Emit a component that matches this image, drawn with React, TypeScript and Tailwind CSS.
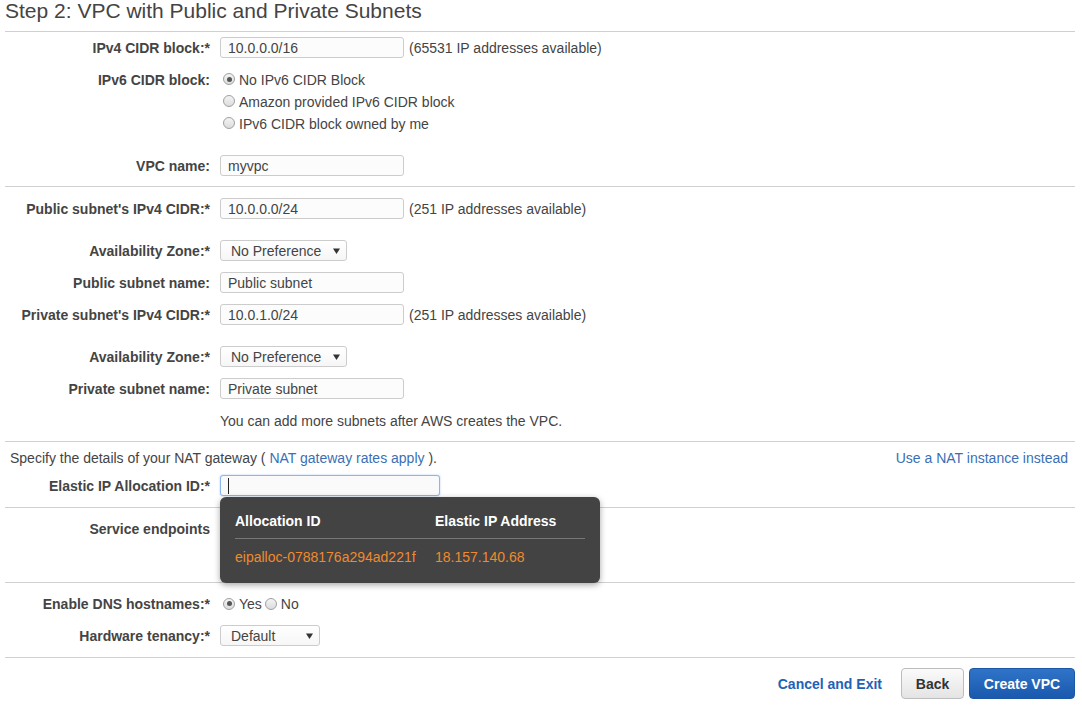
import React from "react";

function Label({ children }: { children: React.ReactNode }) {
  return (
    <div className="w-[205px] shrink-0 text-right font-bold text-[#444] whitespace-nowrap pt-[2px]">
      {children}
    </div>
  );
}

function Row({
  label,
  children,
  className,
}: {
  label: React.ReactNode;
  children?: React.ReactNode;
  className: string;
}) {
  return (
    <div className={className}>
      <Label>{label}</Label>
      <div className="ml-[10px] flex items-center">{children}</div>
    </div>
  );
}

function TextBox({ value, w }: { value: string; w: string }) {
  return (
    <div
      className={
        w +
        " h-[21px] border border-[#cccccc] rounded-[3px] bg-[#fcfcfc] pl-[7px] pt-[2px] flex items-center text-[#444] whitespace-nowrap"
      }
    >
      {value}
    </div>
  );
}

function Arrow() {
  return (
    <svg width="7" height="6" viewBox="0 0 7 6" className="shrink-0">
      <path d="M0 0.5 H7 L3.5 6 Z" fill="#333" />
    </svg>
  );
}

function Select({ value, w }: { value: string; w: string }) {
  return (
    <div
      className={
        w +
        " h-[21px] border border-[#cccccc] rounded-[3px] bg-gradient-to-b from-white to-[#f6f6f6] pl-[10px] pr-[6px] flex items-center justify-between text-[#444] whitespace-nowrap"
      }
    >
      <span className="pt-[2px]">{value}</span>
      <Arrow />
    </div>
  );
}

function Radio({ checked }: { checked?: boolean }) {
  return (
    <span className="w-[12px] h-[12px] rounded-full border border-[#a0a0a0] bg-gradient-to-b from-[#f4f4f4] to-[#dcdcdc] flex items-center justify-center shrink-0">
      {checked ? <span className="w-[5px] h-[5px] rounded-full bg-[#555]" /> : null}
    </span>
  );
}

function Hr({ className }: { className: string }) {
  return <div className={className + " h-px bg-[#d0d0d0]"} />;
}

export default function App() {
  return (
    <div className="relative w-[1082px] h-[726px] bg-white overflow-hidden font-['Liberation_Sans',Arial,sans-serif] text-[14px] text-[#444]">
      <div className="pl-[5px] pr-[7px]">
        <div className="h-[31px] text-[21px] leading-[22px] text-[#444] whitespace-nowrap">
          Step 2: VPC with Public and Private Subnets
        </div>
        <Hr className="" />

        <Row label={<>IPv4 CIDR block:*</>} className="mt-[5px] h-[21px] flex items-center">
          <TextBox value="10.0.0.0/16" w="w-[184px]" />
          <span className="ml-[5px] whitespace-nowrap pt-[2px]">(65531 IP addresses available)</span>
        </Row>

        <div className="mt-[10px] flex items-start">
          <div className="h-[22px] flex items-center">
            <Label>IPv6 CIDR block:</Label>
          </div>
          <div className="ml-[10px] flex flex-col">
            <div className="h-[22px] flex items-center">
              <span className="ml-[3px] mr-[4px]">
                <Radio checked />
              </span>
              <span className="pt-[2px]">No IPv6 CIDR Block</span>
            </div>
            <div className="h-[22px] flex items-center">
              <span className="ml-[3px] mr-[4px]">
                <Radio />
              </span>
              <span className="pt-[2px]">Amazon provided IPv6 CIDR block</span>
            </div>
            <div className="h-[22px] flex items-center">
              <span className="ml-[3px] mr-[4px]">
                <Radio />
              </span>
              <span className="pt-[2px]">IPv6 CIDR block owned by me</span>
            </div>
          </div>
        </div>

        <Row label="VPC name:" className="mt-[21px] h-[21px] flex items-center">
          <TextBox value="myvpc" w="w-[184px]" />
        </Row>

        <Hr className="mt-[10px]" />

        <Row label={<>Public subnet's IPv4 CIDR:*</>} className="mt-[11px] h-[21px] flex items-center">
          <TextBox value="10.0.0.0/24" w="w-[184px]" />
          <span className="ml-[5px] whitespace-nowrap pt-[2px]">(251 IP addresses available)</span>
        </Row>

        <Row label={<>Availability Zone:*</>} className="mt-[21px] h-[21px] flex items-center">
          <Select value="No Preference" w="w-[127px]" />
        </Row>

        <Row label="Public subnet name:" className="mt-[11px] h-[21px] flex items-center">
          <TextBox value="Public subnet" w="w-[184px]" />
        </Row>

        <Row label={<>Private subnet's IPv4 CIDR:*</>} className="mt-[11px] h-[21px] flex items-center">
          <TextBox value="10.0.1.0/24" w="w-[184px]" />
          <span className="ml-[5px] whitespace-nowrap pt-[2px]">(251 IP addresses available)</span>
        </Row>

        <Row label={<>Availability Zone:*</>} className="mt-[21px] h-[21px] flex items-center">
          <Select value="No Preference" w="w-[127px]" />
        </Row>

        <Row label="Private subnet name:" className="mt-[11px] h-[21px] flex items-center">
          <TextBox value="Private subnet" w="w-[184px]" />
        </Row>

        <Row label="" className="mt-[11px] h-[21px] flex items-center">
          <span className="whitespace-nowrap pt-[2px]">You can add more subnets after AWS creates the VPC.</span>
        </Row>

        <Hr className="mt-[10px]" />

        <div className="mt-[5px] h-[21px] flex items-center justify-between pt-[2px]">
          <div className="ml-[5px] whitespace-nowrap">
            Specify the details of your NAT gateway ({" "}
            <span className="text-[#3a6fb5]">NAT gateway rates apply</span> ).
          </div>
          <div className="mr-[7px] text-[#3a6fb5] whitespace-nowrap">Use a NAT instance instead</div>
        </div>

        <Row label={<>Elastic IP Allocation ID:*</>} className="mt-[7px] h-[21px] flex items-center">
          <div className="w-[220px] h-[21px] border border-[#8cb4ee] rounded-[3px] bg-[#fafafa] pl-[7px] flex items-center shadow-[0_0_2px_rgba(102,160,233,0.6)]">
            <span className="w-px h-[16px] bg-[#222]" />
          </div>
        </Row>

        <Hr className="mt-[11px]" />

        <Row label="Service endpoints" className="mt-[10px] h-[21px] flex items-center" />

        <Hr className="mt-[43px]" />

        <Row label={<>Enable DNS hostnames:*</>} className="mt-[10px] h-[21px] flex items-center">
          <span className="ml-[3px] mr-[4px]">
            <Radio checked />
          </span>
          <span className="pt-[2px]">Yes</span>
          <span className="ml-[3px] mr-[4px]">
            <Radio />
          </span>
          <span className="pt-[2px]">No</span>
        </Row>

        <Row label={<>Hardware tenancy:*</>} className="mt-[11px] h-[21px] flex items-center">
          <Select value="Default" w="w-[100px]" />
        </Row>

        <Hr className="mt-[11px]" />

        <div className="mt-[10px] flex items-center justify-end">
          <span className="font-bold text-[#1e62b6] whitespace-nowrap pt-[2px]">Cancel and Exit</span>
          <div className="ml-[19px] w-[63px] h-[31px] rounded-[4px] border border-[#bdbdbd] bg-gradient-to-b from-[#fbfbfb] to-[#e4e4e4] flex items-center justify-center font-bold text-[#333] pt-[2px]">
            Back
          </div>
          <div className="ml-[5px] w-[106px] h-[31px] rounded-[4px] border border-[#1c57a6] bg-gradient-to-b from-[#2f74c9] to-[#1a59ad] flex items-center justify-center font-bold text-white whitespace-nowrap pt-[2px]">
            Create VPC
          </div>
        </div>
      </div>

      <div className="absolute left-[220px] top-[497px] w-[380px] h-[86px] rounded-[6px] bg-[#434343] shadow-[0_2px_6px_rgba(0,0,0,0.35)] px-[15px]">
        <div className="h-[41px] flex items-center pt-[8px] font-bold text-white whitespace-nowrap">
          <span className="w-[200px]">Allocation ID</span>
          <span>Elastic IP Address</span>
        </div>
        <div className="h-px bg-[#777]" />
        <div className="h-[34px] flex items-center pt-[2px] text-[#f08a2c] whitespace-nowrap">
          <span className="w-[200px]">eipalloc-0788176a294ad221f</span>
          <span>18.157.140.68</span>
        </div>
      </div>
    </div>
  );
}
